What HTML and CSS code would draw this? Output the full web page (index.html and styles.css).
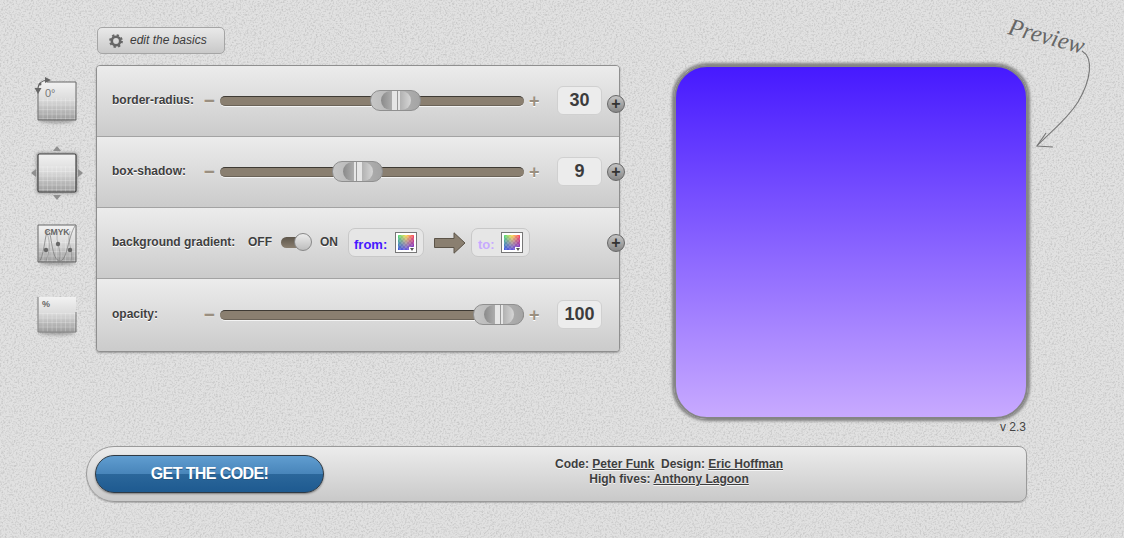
FILE: index.html
```html
<!DOCTYPE html>
<html lang="en">
<head>
<meta charset="utf-8">
<title>CSS3 Generator</title>
<link rel="stylesheet" href="styles.css">
</head>
<body>
<svg class="defs" width="0" height="0" aria-hidden="true">
  <defs>
    <linearGradient id="tile" x1="0" y1="0" x2="0" y2="1"><stop offset="0" stop-color="#f2f2f2"/><stop offset=".45" stop-color="#dcdcdc"/><stop offset="1" stop-color="#9c9c9c"/></linearGradient>
    <pattern id="mesh" width="4.5" height="4.5" patternUnits="userSpaceOnUse"><path d="M4.5 0V4.5H0" fill="none" stroke="#fff" stroke-opacity=".5" stroke-width=".8"/></pattern>
    <linearGradient id="hues" x1="0" y1="0" x2="1" y2="0"><stop offset="0" stop-color="#4fe070"/><stop offset=".5" stop-color="#ffdf50"/><stop offset="1" stop-color="#ff3f5a"/></linearGradient>
    <linearGradient id="cool" x1="0" y1="0" x2="0" y2="1"><stop offset="0" stop-color="#3a30ff" stop-opacity="0"/><stop offset="1" stop-color="#3a30ff" stop-opacity=".8"/></linearGradient>
    <pattern id="checks" width="4" height="4" patternUnits="userSpaceOnUse"><path d="M0 0h2v2H0zM2 2h2v2H2z" fill="#fff" fill-opacity=".14"/></pattern>
  </defs>
</svg>
<main class="page">
  <div class="top">
    <nav class="tools">
      <div class="tool">
        <svg viewBox="0 0 60 60" width="60" height="60">
          <ellipse class="tile-shadow" cx="27" cy="47" rx="18" ry="2.5"/>
          <path d="M8 8H46V46H8Z" fill="url(#tile)"/><path d="M8 24H46V46H8Z" fill="url(#mesh)"/>
          <path d="M17 8H46V46H8V17" class="tile-edge"/>
          <path d="M8 14Q9 7 17 6" class="tile-arc"/>
          <path d="M15 3L21 6L15 9ZM4.500 14L11.500 14L8 20Z" fill="#666"/>
          <circle cx="10" cy="10" r="1.500" fill="#666"/>
          <text x="15" y="23" class="tile-text tile-text-large">0°</text>
        </svg>
      </div>
      <div class="tool">
        <svg viewBox="0 0 60 60" width="60" height="60">
          <rect x="6.500" y="7.500" width="41" height="41" rx="3" class="tile-glow"/>
          <path d="M8 9H46V47H8Z" fill="url(#tile)"/><path d="M8 21H46V47H8Z" fill="url(#mesh)"/>
          <rect x="8" y="9" width="38" height="38" rx="1.500" class="tile-edge tile-edge-dark"/>
          <path d="M27 1L31 6H23ZM27 55L23 50H31ZM1 28L6 24V32ZM53 28L48 32V24Z" fill="#8f8f8f"/>
        </svg>
      </div>
      <div class="tool">
        <svg viewBox="0 0 60 60" width="60" height="60">
          <ellipse class="tile-shadow" cx="27" cy="47" rx="18" ry="2.5"/>
          <path d="M8 9H46V46H8Z" fill="url(#tile)"/><path d="M8 24H46V46H8Z" fill="url(#mesh)"/>
          <path d="M8 46V9H46V46Z" class="tile-edge"/>
          <path d="M8 46C14 45 15 15 18 15C22 15 21 45 30 45C37 45 38 21 45 10" class="tile-curve"/>
          <path d="M16 14C20 25 21 31 16 45M28 15C24 27 33 33 29 45M40 15C36 27 44 33 41 45" class="tile-curve tile-curve-faint"/>
          <circle cx="16" cy="34" r="2.200" fill="#666"/><circle cx="28" cy="28" r="2.200" fill="#666"/><circle cx="40" cy="34" r="2.200" fill="#666"/>
          <text x="27" y="19" class="tile-text tile-text-cmyk">CMYK</text>
        </svg>
      </div>
      <div class="tool">
        <svg viewBox="0 0 60 60" width="60" height="60">
          <ellipse class="tile-shadow" cx="27" cy="46" rx="18" ry="2.5"/>
          <path d="M8 10H46V45H8Z" fill="url(#tile)"/><path d="M8 26H46V45H8Z" fill="url(#mesh)"/>
          <path d="M8 10V45H46V25" class="tile-edge tile-edge-soft"/>
          <text x="12" y="20" class="tile-text">%</text>
        </svg>
      </div>
    </nav>
    <section class="editor">
      <button class="basics" type="button">
        <svg class="gear" viewBox="0 0 14 14" width="14" height="14"><circle cx="7" cy="7" r="4.200" fill="none" stroke="#666" stroke-width="2.600"/><circle cx="7" cy="7" r="5.900" fill="none" stroke="#666" stroke-width="2" stroke-dasharray="2.300 2.330"/></svg>
        <span>edit the basics</span>
      </button>
      <div class="panel">
        <div class="row">
          <span class="label">border-radius:</span>
          <span class="step">−</span>
          <div class="track"><div class="thumb" style="left:150px"><i class="grip"></i></div></div>
          <span class="step step-plus">+</span>
          <output class="value">30</output>
          <button class="more" type="button">+</button>
        </div>
        <div class="row">
          <span class="label">box-shadow:</span>
          <span class="step">−</span>
          <div class="track"><div class="thumb" style="left:112px"><i class="grip"></i></div></div>
          <span class="step step-plus">+</span>
          <output class="value">9</output>
          <button class="more" type="button">+</button>
        </div>
        <div class="row">
          <span class="label label-wide">background gradient:</span>
          <span class="flag flag-off">OFF</span>
          <div class="toggle"><i class="knob"></i></div>
          <span class="flag flag-on">ON</span>
          <div class="stop stop-from">
            <span>from:</span>
            <svg class="swatch" viewBox="0 0 22 21" width="22" height="21"><rect x=".5" y=".5" width="21" height="20" fill="#fff" stroke="#777"/><rect x="3" y="3" width="16" height="15" fill="url(#hues)"/><rect x="3" y="3" width="16" height="15" fill="url(#cool)"/><rect x="3" y="3" width="16" height="15" fill="url(#checks)"/><path d="M14 15h5v3.500h-5z" fill="#fff"/><path d="M15 16h4l-2 3z" fill="#555"/></svg>
          </div>
          <svg class="arrow" viewBox="0 0 32 22" width="32" height="22"><path d="M.5 6.500H20V.8L31 11 20 21.200V15.500H.5Z" fill="#8a7f70" stroke="#5c5448"/></svg>
          <div class="stop stop-to">
            <span>to:</span>
            <svg class="swatch" viewBox="0 0 22 21" width="22" height="21"><rect x=".5" y=".5" width="21" height="20" fill="#fff" stroke="#777"/><rect x="3" y="3" width="16" height="15" fill="url(#hues)"/><rect x="3" y="3" width="16" height="15" fill="url(#cool)"/><rect x="3" y="3" width="16" height="15" fill="url(#checks)"/><path d="M14 15h5v3.500h-5z" fill="#fff"/><path d="M15 16h4l-2 3z" fill="#555"/></svg>
          </div>
          <button class="more" type="button">+</button>
        </div>
        <div class="row row-last">
          <span class="label">opacity:</span>
          <span class="step">−</span>
          <div class="track"><div class="thumb" style="left:253px"><i class="grip"></i></div></div>
          <span class="step step-plus">+</span>
          <output class="value">100</output>
        </div>
      </div>
    </section>
    <section class="stagewrap">
      <div class="preview"></div>
      <p class="version">v 2.3</p>
      <span class="note">Preview</span>
      <svg class="note-arrow" viewBox="0 0 60 100" width="60" height="100"><path d="M48 1C60 8 57 30 44 52C32 71 14 84 3 96" fill="none" stroke="#777" stroke-width="1.100"/><path d="M12 83L3 96L19 97" fill="none" stroke="#777" stroke-width="1.200"/></svg>
    </section>
  </div>
  <footer class="bar">
    <button class="cta" type="button">GET THE CODE!</button>
    <p class="credits">Code: <a href="#">Peter Funk</a>&nbsp; Design: <a href="#">Eric Hoffman</a><br>High fives: <a href="#">Anthony Lagoon</a></p>
  </footer>
</main>
</body>
</html>
```
FILE: styles.css
```css
* { box-sizing: border-box; }
html, body { margin: 0; padding: 0; }
body {
  width: 1124px;
  height: 538px;
  overflow: hidden;
  font-family: "Liberation Sans", Arial, sans-serif;
  color: #3a3a3a;
  background-color: #dcdcdc;
  background-image: url("data:image/svg+xml,%3Csvg xmlns='http://www.w3.org/2000/svg' width='300' height='300'%3E%3Cfilter id='n' color-interpolation-filters='sRGB'%3E%3CfeTurbulence type='fractalNoise' baseFrequency='.55' numOctaves='3' stitchTiles='stitch'/%3E%3CfeColorMatrix values='2 0 0 0 -.13 2 0 0 0 -.13 2 0 0 0 -.13 0 0 0 0 .13'/%3E%3C/filter%3E%3Crect width='300' height='300' filter='url(%23n)'/%3E%3C/svg%3E");
}
.defs { position: absolute; }
.page { padding: 27px 0 0 30px; }
.top { display: flex; height: 419px; }

.tools { width: 66px; padding-top: 47px; }
.tool { height: 71px; }
.tool svg { display: block; }
.tile-shadow { fill: #555; opacity: .4; filter: blur(1.5px); }
.tile-glow { fill: #666; opacity: .6; filter: blur(1.5px); }
.tile-edge { fill: none; stroke: #666; stroke-width: 1; }
.tile-edge-dark { stroke: #444; stroke-width: 1.2; }
.tile-edge-soft { stroke: #777; }
.tile-arc { fill: none; stroke: #666; stroke-width: 1.200; }
.tile-curve { fill: none; stroke: #777; stroke-width: .7; }
.tile-curve-faint { opacity: .6; }
.tile-text { font: bold 9px "Liberation Sans", sans-serif; fill: #666; }
.tile-text-large { font-size: 11px; font-weight: normal; fill: #777; }
.tile-text-cmyk { text-anchor: middle; font-size: 8.500px; }

.editor { width: 524px; }
.basics {
  display: flex;
  align-items: center;
  gap: 7px;
  width: 128px;
  height: 27px;
  margin: 0 0 11px 1px;
  padding: 0 0 2px 11px;
  border: 1px solid #a5a5a5;
  border-radius: 5px;
  background: linear-gradient(#e9e9e9, #c9c9c9);
  font: italic 12px "Liberation Sans", sans-serif;
  color: #3c3c3c;
}
.gear { flex: none; margin-top: 2px; }

.panel {
  width: 524px;
  border: 1px solid #8f8f8f;
  border-radius: 4px;
  box-shadow: 0 1px 2px rgba(0,0,0,.3);
  background: #ddd;
}
.row {
  position: relative;
  display: flex;
  align-items: center;
  height: 71px;
  padding: 0 0 1px 15px;
  border-bottom: 1px solid #a3a3a3;
  background: linear-gradient(#ececec, #cbcbcb);
}
.row-last { height: 72px; border-bottom: 0; border-radius: 0 0 3px 3px; }
.row:first-child { border-radius: 3px 3px 0 0; }
.label, .flag {
  font-size: 12px;
  font-weight: bold;
  color: #3f3f3f;
  text-shadow: 0 1px 0 #fff;
  margin-bottom: 2px;
}
.label { width: 93px; }
.label-wide { width: 136px; }
.step {
  width: 15px;
  margin-left: -1px;
  margin-right: 1px;
  font-size: 18px;
  font-weight: bold;
  color: #9a8f80;
  -webkit-text-stroke: .4px #9a8f80;
  text-shadow: 0 1px 0 #fff;
  line-height: 1;
}
.step-plus { width: 33px; margin: 0; padding-left: 5px; font-size: 18px; -webkit-text-stroke: 0; }
.track {
  position: relative;
  width: 304px;
  height: 10px;
  border-top: 1px solid #3e3a34;
  border-bottom: 1px solid #6b6358;
  border-radius: 5px;
  background: #8a7f70;
  box-shadow: 0 1px 0 rgba(255,255,255,.7);
}
.thumb {
  position: absolute;
  top: -7px;
  width: 51px;
  height: 21px;
  border: 1px solid #8f8f8f;
  border-radius: 10px;
  background: linear-gradient(90deg, #c6c6c6, #a4a4a4);
}
.grip {
  position: absolute;
  left: 10px;
  top: 0;
  width: 30px;
  height: 19px;
  border-radius: 10px;
  background: linear-gradient(90deg, #8a8a8a, #aeaeae 38%, #e6e6e6 38%, #e6e6e6 42%, #999 42%, #999 45%, #e6e6e6 45%, #e6e6e6 55%, #999 55%, #999 58%, #e6e6e6 58%, #e6e6e6 62%, #b0b0b0 62%, #d6d6d6);
}
.value {
  width: 45px;
  height: 29px;
  border: 1px solid #d0d0d0;
  border-radius: 6px;
  background: #ececec;
  font-size: 18px;
  font-weight: bold;
  line-height: 27px;
  text-align: center;
  color: #3c3c3c;
}
.more {
  position: absolute;
  right: -6px;
  top: 26px;
  width: 18px;
  height: 18px;
  padding: 0;
  border: 1px solid #666;
  border-radius: 50%;
  background: linear-gradient(#c4c4c4, #868686);
  font: bold 16px/14px "Liberation Sans", sans-serif;
  color: #333;
}
.row:first-child .more { top: 29px; }
.flag-off { width: 33px; }
.toggle {
  position: relative;
  width: 30px;
  height: 11px;
  margin-right: 9px;
  border-radius: 6px;
  background: linear-gradient(#5e564b, #8a7f70);
}
.knob {
  position: absolute;
  right: -1px;
  top: -4px;
  width: 18px;
  height: 18px;
  border: 1px solid #888;
  border-radius: 50%;
  background: linear-gradient(#ececec, #bdbdbd);
}
.flag-on { width: 28px; }
.stop {
  display: flex;
  align-items: center;
  justify-content: space-between;
  height: 29px;
  padding: 0 6px 0 5px;
  border: 1px solid #c8c8c8;
  border-radius: 7px;
  background: #e6e6e6;
  font-size: 13px;
  font-weight: bold;
}
.stop span { padding-top: 3px; }
.stop-from { width: 76px; color: #4619ff; }
.stop-to { width: 59px; color: #c8aaff; }
.stop-to span { padding-left: 1px; }
.arrow { margin: 0 5px 0 10px; }

.stagewrap { position: relative; width: 354px; margin-left: 54px; padding-top: 38px; }
.preview {
  width: 354px;
  height: 354px;
  border: 2px solid #858585;
  border-radius: 33px;
  box-shadow: 0 0 3px 2px #808080;
  background: linear-gradient(#4619ff, #c8aaff);
}
.version {
  margin: 0;
  padding: 1px 2px 0 0;
  font-size: 12px;
  line-height: 14px;
  text-align: right;
  color: #444;
}
.note {
  position: absolute;
  left: 335px;
  top: -14px;
  font: italic 24px "Liberation Serif", serif;
  color: #666;
  transform: rotate(15deg);
  transform-origin: 0 50%;
}
.note-arrow { position: absolute; left: 360px; top: 23px; }

.bar {
  display: flex;
  align-items: center;
  width: 941px;
  height: 56px;
  margin: 0 0 0 56px;
  padding: 0 12px 0 8px;
  border: 1px solid #9a9a9a;
  border-radius: 28px 8px 8px 28px;
  background: linear-gradient(#ececec, #c9c9c9);
  box-shadow: 0 1px 1px rgba(0,0,0,.2);
}
.cta {
  flex: none;
  width: 229px;
  height: 38px;
  padding: 0;
  border: 1px solid #2f3a44;
  border-radius: 19px;
  background: linear-gradient(#609dd0, #4885ba 50%, #2b679b 50%, #1e5a90);
  box-shadow: 0 1px 2px rgba(0,0,0,.4);
  font: bold 16px "Liberation Sans", sans-serif;
  letter-spacing: -.6px;
  color: #fff;
  text-shadow: 0 1px 0 #25557f;
}
.credits {
  flex: 1;
  margin: 0;
  padding-bottom: 4px;
  font-size: 12px;
  font-weight: bold;
  line-height: 15px;
  text-align: center;
  color: #3e3e3e;
  text-shadow: 0 1px 0 #f5f5f5;
}
.credits a { color: #3e3e3e; }
```
